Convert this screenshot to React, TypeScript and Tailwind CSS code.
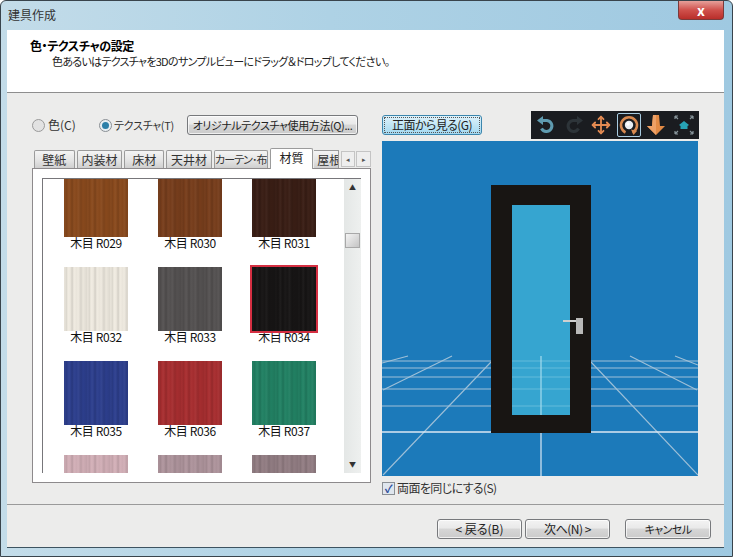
import React from 'react';
import { Move } from 'lucide-react';

const grain =
  'bg-[repeating-linear-gradient(90deg,rgba(0,0,0,0.08)_0px,rgba(255,255,255,0.02)_1px,rgba(0,0,0,0.11)_2px,rgba(0,0,0,0)_4px,rgba(255,255,255,0.04)_5px,rgba(0,0,0,0.04)_7px,rgba(0,0,0,0.13)_8px,rgba(255,255,255,0.02)_10px,rgba(0,0,0,0.03)_13px,rgba(255,255,255,0.04)_14px,rgba(0,0,0,0.1)_17px,rgba(0,0,0,0.02)_19px,rgba(0,0,0,0.08)_23px)]';

const swatches = [
  { name: '木目 R029', color: 'bg-[#8a4a1d]' },
  { name: '木目 R030', color: 'bg-[#783e1c]' },
  { name: '木目 R031', color: 'bg-[#3a1e15]' },
  { name: '木目 R032', color: 'bg-[#f0ebe1]' },
  { name: '木目 R033', color: 'bg-[#555252]' },
  { name: '木目 R034', color: 'bg-[#171515]', selected: true },
  { name: '木目 R035', color: 'bg-[#2d3f8e]' },
  { name: '木目 R036', color: 'bg-[#a82e30]' },
  { name: '木目 R037', color: 'bg-[#228264]' },
  // last row is scrolled off, its labels are out of view
  { name: '', color: 'bg-[#d3b0b8]' },
  { name: '', color: 'bg-[#af959d]' },
  { name: '', color: 'bg-[#937e84]' },
];

const tabs = [
  { label: '壁紙', width: 'w-[41px]' },
  { label: '内装材', width: 'w-[46px]' },
  { label: '床材', width: 'w-[40px]' },
  { label: '天井材', width: 'w-[46px]' },
  { label: 'カーテン･布', width: 'w-[54px] text-[11px] tracking-[-1px]' },
];

const btn =
  'h-[20px] whitespace-nowrap rounded-[3px] border border-[#77797c] bg-[linear-gradient(#f3f3f3,#e9e9e9_45%,#d6d6d6_50%,#cbcbcb)] leading-[18px] text-[#222] shadow-[inset_0_0_0_1px_rgba(255,255,255,0.7)]';

function ToolCell({ active, children }: { active?: boolean; children: React.ReactNode }) {
  return (
    <div
      className={
        active
          ? 'flex h-[24px] w-[24px] items-center justify-center rounded-[2px] border border-[#a8cbe0]'
          : 'flex h-[24px] w-[24px] items-center justify-center'
      }
    >
      {children}
    </div>
  );
}

function Toolbar() {
  return (
    <div className="flex h-[28px] w-[168px] items-center justify-between bg-[#1a1c20] px-[3px]">
      <ToolCell>
        <svg width="20" height="20" viewBox="0 0 20 20" fill="none">
          <path d="M5 5.5h6a5.5 5.5 0 1 1-5.5 8" stroke="#5f9bb0" strokeWidth="3" />
          <path d="M1 5.5 7 1v9z" fill="#5f9bb0" />
        </svg>
      </ToolCell>
      <ToolCell>
        <svg width="20" height="20" viewBox="0 0 20 20" fill="none">
          <path d="M15 5.5H9a5.5 5.5 0 1 0 5.5 8" stroke="#2d3439" strokeWidth="3" />
          <path d="M19 5.5 13 1v9z" fill="#2d3439" />
        </svg>
      </ToolCell>
      <ToolCell>
        <Move size={20} color="#e28a52" strokeWidth={2.2} />
      </ToolCell>
      <ToolCell active>
        <svg width="22" height="22" viewBox="0 0 22 22" fill="none">
          <path d="M14.5 18.5a8 8 0 1 0-7 0" stroke="#d98a50" strokeWidth="2.6" />
          <path d="M13 15.5l6 1.5-3.5 4z" fill="#d98a50" />
          <circle cx="11" cy="11" r="4.2" fill="#e9edf2" />
          <circle cx="10" cy="10" r="1.8" fill="#ffffff" />
        </svg>
      </ToolCell>
      <ToolCell>
        <svg width="22" height="22" viewBox="0 0 22 22">
          <path d="M8 1h6l1 11h5l-9 9-9-9h5z" fill="#e28a45" />
          <path d="M8 1h3v20l-9-9h5z" fill="#eda066" />
        </svg>
      </ToolCell>
      <ToolCell>
        <svg width="22" height="22" viewBox="0 0 22 22" fill="none">
          <path d="M2 2l3 3M2 2h3M2 2v3M20 2l-3 3M20 2h-3M20 2v3M2 20l3-3M2 20h3M2 20v-3M20 20l-3-3M20 20h-3M20 20v-3" stroke="#87949a" strokeWidth="1.2" />
          <path d="M11 7l5 4-1.500 1v3h-7v-3l-1.500-1z" fill="#27a3b5" />
        </svg>
      </ToolCell>
    </div>
  );
}

function SampleView() {
  const horizontals = [361, 368, 377, 389, 406];
  return (
    <svg width="316" height="335" viewBox="382 141 316 335" className="block">
      <rect x="382" y="141" width="316" height="335" fill="#1c7aba" />
      <g stroke="#9fc0d8" strokeWidth="1.1">
        {horizontals.map((y) => (
          <line key={y} x1="382" y1={y} x2="698" y2={y} />
        ))}
        <line x1="383" y1="475" x2="491" y2="362" />
        <line x1="383" y1="390" x2="452" y2="356" />
        <line x1="382" y1="363" x2="408" y2="356" />
        <line x1="698" y1="475" x2="591" y2="362" />
        <line x1="697" y1="390" x2="630" y2="356" />
        <line x1="698" y1="365" x2="675" y2="356" />
      </g>
      <line x1="382" y1="432" x2="698" y2="432" stroke="#dbe9f3" strokeWidth="1.5" />
      <line x1="541" y1="432" x2="541" y2="476" stroke="#b5d3e8" strokeWidth="1.5" />
      <rect x="491" y="185" width="100" height="248" fill="#181513" />
      <rect x="512" y="205" width="58" height="210" fill="#36a5d0" />
      <g stroke="#62bbdb" strokeWidth="1">
        {horizontals.map((y) => (
          <line key={y} x1="512" y1={y} x2="570" y2={y} />
        ))}
      </g>
      <line x1="541" y1="356" x2="541" y2="415" stroke="#a6dcef" strokeWidth="1.2" />
      <rect x="563" y="320" width="14" height="2" fill="#d0d0d0" />
      <rect x="576" y="318" width="7" height="16" fill="#b9b9b9" />
    </svg>
  );
}

export default function App() {
  return (
    <div
      className="flex h-[557px] w-[733px] flex-col overflow-hidden rounded-t-[6px] border border-[#39444c] bg-[linear-gradient(90deg,#c3dce9,#aed2e5_45%,#9fc9e1)] font-['Noto_Sans_CJK_JP','Noto_Sans',sans-serif] [font-feature-settings:'palt'] text-[#1a1a1a]"
    >
      {/* Title bar */}
      <div className="flex h-[29px] shrink-0 items-start justify-between pl-[7px] pr-[8px]">
        <span className="mt-[5px] text-[12px] leading-[18px] text-[#333]">建具作成</span>
        <div className="flex h-[19px] w-[46px] items-center justify-center rounded-b-[4px] border border-t-0 border-[#7a3a3a] bg-[linear-gradient(#e6a09a,#d0514c_50%,#b92e2a)] text-[14px] leading-[17px] font-bold text-white">
          x
        </div>
      </div>

      <div className="mr-[8px] ml-[6px] mb-[8px] flex flex-1 flex-col border-b border-[#3d5360]">
        {/* Header */}
        <div className="h-[63px] shrink-0 border-b border-[#8e8e8e] bg-white pt-[8px] pl-[23px]">
          <div className="text-[12px] leading-[16px] font-bold tracking-[-0.4px] text-black">色・テクスチャの設定</div>
          <div className="pl-[22px] text-[11px] leading-[15px] tracking-[-0.7px] text-[#222]">
            色あるいはテクスチャを3Dのサンプルビューにドラッグ＆ドロップしてください。
          </div>
        </div>

        {/* Main */}
        <div className="flex h-[412px] shrink-0 gap-[11px] border-b border-[#9a9a9a] bg-[#ececeb] pl-[25px]">
          <div className="w-[339px] pt-[22px]">
            <div className="flex h-[20px] items-center text-[12px] text-[#333]">
              <span className="h-[13px] w-[13px] rounded-full border border-[#9a9a9a] bg-[#e2e2e2]" />
              <span className="ml-[3px] w-[51px]">色(C)</span>
              <span className="flex h-[13px] w-[13px] items-center justify-center rounded-full border border-[#8a8f94] bg-[#e8eef2]">
                <span className="h-[7px] w-[7px] rounded-full bg-[#2c7fa8]" />
              </span>
              <span className="ml-[2px] w-[73px] text-[11px] tracking-[-0.3px]">テクスチャ(T)</span>
              <button className={`${btn} w-[171px] text-[11px] tracking-[-0.4px]`}>オリジナルテクスチャ使用方法(Q)...</button>
            </div>

            {/* Tabs */}
            <div className="mt-[13px] flex h-[20px] items-end gap-[2px] pl-[2px] text-[12px] leading-[17px]">
              {tabs.map((t) => (
                <div
                  key={t.label}
                  className={`${t.width} h-[18px] overflow-hidden rounded-t-[2px] border border-b-0 border-[#9b9b9b] bg-[linear-gradient(#f4f4f4,#e4e4e4_55%,#cfcfcf)] text-center whitespace-nowrap text-[#333]`}
                >
                  {t.label}
                </div>
              ))}
              <div className="relative z-10 -mb-[1px] h-[21px] w-[44px] rounded-t-[2px] border border-b-0 border-[#9b9b9b] bg-white text-center text-[#222]">
                材質
              </div>
              <div className="-ml-[1px] h-[18px] w-[25px] overflow-hidden border-t border-r border-[#9b9b9b] bg-[linear-gradient(#f4f4f4,#e4e4e4_55%,#cfcfcf)] pl-[3px] whitespace-nowrap text-[#333]">
                屋根
              </div>
              <div className="mb-[1px] flex h-[16px] w-[14px] items-center justify-center border border-[#c4c4c4] bg-[#eeeeee] text-[7px] text-[#555]">◂</div>
              <div className="mb-[1px] -ml-[1px] flex h-[16px] w-[15px] items-center justify-center border border-[#c4c4c4] bg-[#eeeeee] text-[7px] text-[#555]">▸</div>
            </div>

            {/* Texture panel */}
            <div className="h-[315px] border border-[#8d8a8c] bg-white p-[9px]">
              <div className="flex h-[295px] border-t border-l border-[#77767a]">
                <div className="flex-1 overflow-hidden">
                  <div className="-mt-[6px] grid grid-cols-[64px_64px_64px] gap-x-[30px] gap-y-[17px] pl-[21px]">
                    {swatches.map((s) => (
                      <div key={s.color} className="h-[77px]">
                        <div
                          className={
                            s.selected
                              ? `${s.color} ${grain} h-[64px] w-[64px] outline-2 outline-[#d52f42]`
                              : `${s.color} ${grain} h-[64px] w-[64px]`
                          }
                        />
                        <div className="h-[13px] text-center text-[12px] leading-[11px] tracking-[-0.4px] whitespace-nowrap text-[#111]">
                          {s.name}
                        </div>
                      </div>
                    ))}
                  </div>
                </div>
                <div className="flex w-[17px] flex-col items-center bg-[linear-gradient(90deg,#e4e7e6,#eef0ef)] text-[7px] text-[#333]">
                  <div className="flex h-[17px] items-center leading-none">▲</div>
                  <div className="mt-[37px] h-[15px] w-[15px] border border-[#a8a8a8] bg-[linear-gradient(135deg,#f4f4f4,#c4c4c4)]" />
                  <div className="mt-auto flex h-[17px] items-center leading-none">▼</div>
                </div>
              </div>
            </div>
          </div>

          {/* Preview */}
          <div className="w-[317px] pt-[18px]">
            <div className="flex h-[28px] items-center justify-between">
              <button className="h-[20px] w-[100px] rounded-[3px] border border-[#3c86ad] bg-[linear-gradient(#def2fb,#c4e7f6_45%,#a3d8f0)] text-[12px] leading-[18px] tracking-[-0.6px] whitespace-nowrap text-[#222] outline-1 -outline-offset-3 outline-[#555] outline-dotted">
                正面から見る(G)
              </button>
              <Toolbar />
            </div>
            <div className="mt-[2px] h-[335px] w-[316px]">
              <SampleView />
            </div>
            <div className="mt-[5px] flex h-[14px] items-center text-[12px] tracking-[-0.6px] text-[#333]">
              <span className="flex h-[13px] w-[13px] items-center justify-center border border-[#8a8f94] bg-[#dfe6ee] text-[11px] leading-none font-bold text-[#2b4c9a]">
                ✓
              </span>
              <span className="ml-[2px]">両面を同じにする(S)</span>
            </div>
          </div>
        </div>

        {/* Footer */}
        <div className="flex flex-1 justify-end bg-[#ececeb] pt-[14px] pr-[13px]">
          <button className={`${btn} w-[85px] text-[12px]`}>&lt; 戻る(B)</button>
          <button className={`${btn} ml-[3px] w-[85px] text-[12px] tracking-[-0.5px]`}>次へ(N) &gt;</button>
          <button className={`${btn} ml-[15px] w-[86px] text-[11px] tracking-[-0.6px]`}>キャンセル</button>
        </div>
      </div>
    </div>
  );
}
